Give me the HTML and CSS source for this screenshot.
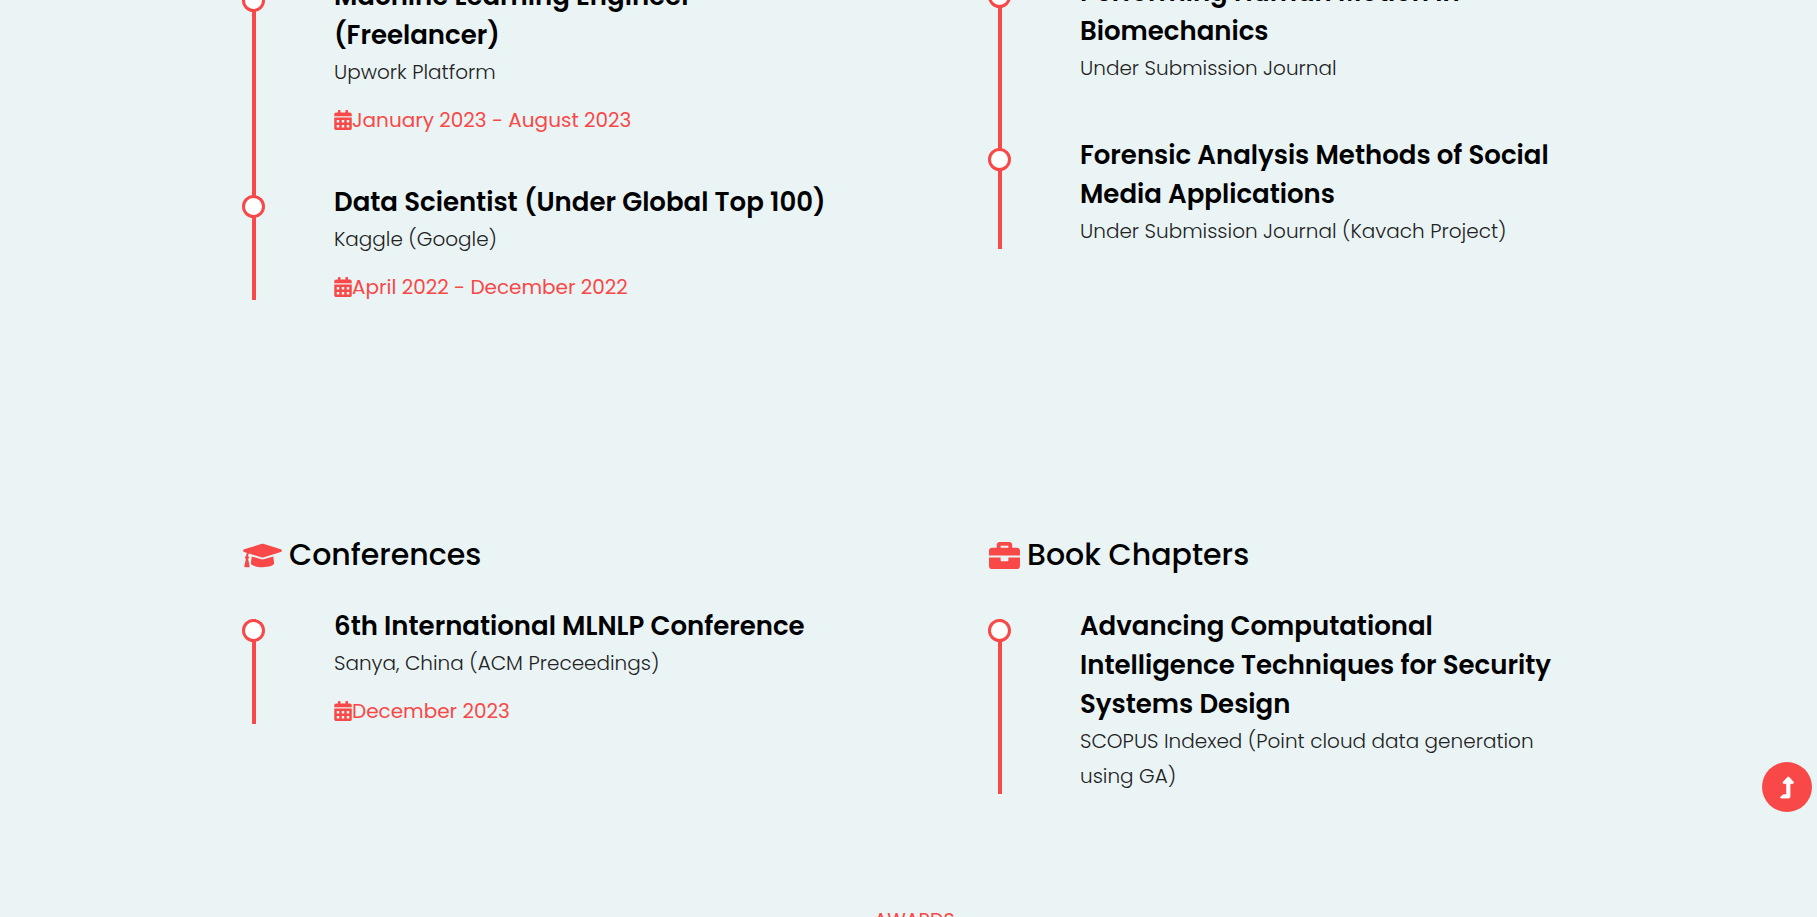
FILE: index.html
```html
<!DOCTYPE html>
<html lang="en">
<head>
<meta charset="utf-8">
<meta name="viewport" content="width=device-width, initial-scale=1">
<title>Resume</title>
<link rel="stylesheet" href="styles.css">
</head>
<body>
<svg class="sprite" aria-hidden="true">
  <symbol id="calendar" viewBox="0 0 448 512"><path fill-rule="evenodd" d="M0 464c0 26.500 21.500 48 48 48h352c26.500 0 48-21.500 48-48V192H0zM64 256h64v64H64zm128 0h64v64h-64zm128 0h64v64h-64zM64 384h64v64H64zm128 0h64v64h-64zm128 0h64v64h-64zM400 64h-48V16c0-8.800-7.200-16-16-16h-32c-8.800 0-16 7.200-16 16v48H160V16c0-8.800-7.200-16-16-16h-32c-8.800 0-16 7.200-16 16v48H48C21.500 64 0 85.500 0 112v48h448v-48c0-26.500-21.500-48-48-48z"/></symbol>
</svg>
<main class="resume">
  <section class="columns">
    <div class="column column-experience">
      <ol class="timeline">
        <li class="entry">
          <h3 class="entry-title">Machine Learning Engineer (Freelancer)</h3>
          <p class="entry-text">Upwork Platform</p>
          <p class="entry-date"><svg class="date-icon" aria-hidden="true"><use href="#calendar"/></svg>January 2023 - August 2023</p>
        </li>
        <li class="entry">
          <h3 class="entry-title">Data Scientist (Under Global Top 100)</h3>
          <p class="entry-text">Kaggle (Google)</p>
          <p class="entry-date"><svg class="date-icon" aria-hidden="true"><use href="#calendar"/></svg>April 2022 - December 2022</p>
        </li>
      </ol>
    </div>
    <div class="column">
      <ol class="timeline">
        <li class="entry">
          <h3 class="entry-title">Performing Human Motion in<br>Biomechanics</h3>
          <p class="entry-text">Under Submission Journal</p>
        </li>
        <li class="entry">
          <h3 class="entry-title">Forensic Analysis Methods of Social<br>Media Applications</h3>
          <p class="entry-text">Under Submission Journal (Kavach Project)</p>
        </li>
      </ol>
    </div>
  </section>
  <section class="columns columns-publications">
    <div class="column">
      <h2 class="column-title"><svg class="cap-icon" viewBox="0 0 640 512" aria-hidden="true"><path d="M622.340 153.200L343.400 67.500c-15.200-4.670-31.600-4.670-46.790 0L17.660 153.200c-23.540 7.230-23.540 38.360 0 45.590l48.630 14.940c-10.670 13.190-17.230 29.280-17.880 46.900C38.780 266.150 32 276.110 32 288c0 10.780 5.680 19.850 13.860 25.650L20.330 428.530C18.110 438.520 25.710 448 35.940 448h56.110c10.240 0 17.840-9.480 15.620-19.470L82.140 313.650C90.320 307.850 96 298.780 96 288c0-11.570-6.470-21.250-15.660-26.870.76-15.020 8.440-28.300 20.690-36.720L296.600 284.500c9.060 2.780 26.440 6.250 46.790 0l278.950-85.700c23.550-7.240 23.550-38.360 0-45.600zM352.790 315.090c-28.530 8.760-52.840 3.920-65.590 0l-145.020-44.550L128 384c0 35.350 85.960 64 192 64s192-28.650 192-64l-14.180-113.470z"/></svg>Conferences</h2>
      <ol class="timeline">
        <li class="entry">
          <h3 class="entry-title">6th International MLNLP Conference</h3>
          <p class="entry-text">Sanya, China (ACM Preceedings)</p>
          <p class="entry-date"><svg class="date-icon" aria-hidden="true"><use href="#calendar"/></svg>December 2023</p>
        </li>
      </ol>
    </div>
    <div class="column">
      <h2 class="column-title"><svg class="case-icon" viewBox="0 0 512 512" aria-hidden="true"><path d="M320 336c0 8.840-7.160 16-16 16h-96c-8.840 0-16-7.160-16-16v-48H0v144c0 25.600 22.400 48 48 48h416c25.600 0 48-22.400 48-48V288H320v48zm144-208h-80V80c0-25.600-22.400-48-48-48H176c-25.600 0-48 22.400-48 48v48H48c-25.600 0-48 22.400-48 48v80h512v-80c0-25.600-22.400-48-48-48zm-144 0H192V96h128v32z"/></svg>Book Chapters</h2>
      <ol class="timeline">
        <li class="entry">
          <h3 class="entry-title">Advancing Computational<br>Intelligence Techniques for Security<br>Systems Design</h3>
          <p class="entry-text">SCOPUS Indexed (Point cloud data generation<br>using GA)</p>
        </li>
      </ol>
    </div>
  </section>
</main>
<section class="awards">
  <p class="awards-label">AWARDS</p>
</section>
<button class="to-top" type="button" aria-label="Back to top"><svg class="to-top-icon" viewBox="0 0 320 512" aria-hidden="true"><path d="M313.550 119.670L209.590 7.670c-9.490-10.220-25.680-10.230-35.180 0L70.440 119.670C56.230 134.970 67.060 160 88.020 160H152v272H68.020a12 12 0 0 0-8.480 3.510l-56 56C-4.020 499.070 1.330 512 12.020 512H208c13.260 0 24-10.740 24-24V160h63.970c20.870 0 31.850-24.970 17.580-40.330z"/></svg></button>
</body>
</html>
```
FILE: styles.css
```css
:root {
  --accent: #f84848;
  --page: #eaf4f5;
}

*,
*::before,
*::after {
  box-sizing: border-box;
}

html {
  overflow: hidden;
}

body {
  margin: 0;
  overflow: hidden;
  background: var(--page);
  color: #000;
  font-family: Poppins, Inter, "Open Sans", sans-serif;
}

h2,
h3,
p,
ol {
  margin: 0;
  padding: 0;
}

svg {
  fill: currentColor;
}

.sprite {
  display: none;
}

.resume {
  width: 90%;
  max-width: 1333px;
  margin: -27px auto 0;
}

.columns {
  display: grid;
  grid-template-columns: 1fr 1fr;
  column-gap: 159px;
}

.column-experience {
  padding-top: 4px;
}

.columns-publications {
  padding-top: 232px;
}

.column-title {
  display: flex;
  align-items: center;
  gap: 7px;
  margin-bottom: 29px;
  padding-left: 1px;
  font-size: 30px;
  font-weight: 500;
  line-height: 46px;
}

.cap-icon,
.case-icon {
  height: 31px;
  color: var(--accent);
}

.cap-icon {
  width: 39px;
}

.case-icon {
  width: 31px;
}

.timeline {
  list-style: none;
}

.entry {
  position: relative;
  padding: 0 0 50px 92px;
}

.entry:last-child {
  padding-bottom: 0;
}

.entry::before {
  content: "";
  position: absolute;
  top: 12px;
  bottom: 0;
  left: 10px;
  width: 4px;
  background: var(--accent);
}

.entry:not(:last-child)::before {
  bottom: -12px;
}

.entry::after {
  content: "";
  position: absolute;
  top: 12px;
  left: 0;
  width: 23px;
  height: 23px;
  border: 3px solid var(--accent);
  border-radius: 50%;
  background: #fff;
}

.entry-title {
  font-size: 26px;
  font-weight: 600;
  line-height: 39px;
}

.entry-text {
  color: #222;
  font-size: 20px;
  font-weight: 300;
  line-height: 35px;
}

.entry-date {
  display: flex;
  align-items: center;
  margin-top: 17px;
  color: var(--accent);
  font-size: 20px;
  line-height: 26px;
}

.date-icon {
  width: 18px;
  height: 20px;
}

.awards {
  padding: 112px 0 0 12px;
  text-align: center;
}

.awards-label {
  color: var(--accent);
  font-size: 19px;
  font-weight: 400;
  line-height: 30px;
}

.to-top {
  position: fixed;
  right: 5px;
  bottom: 105px;
  display: flex;
  align-items: center;
  justify-content: center;
  width: 50px;
  height: 50px;
  padding: 0;
  border: 0;
  border-radius: 50%;
  background: var(--accent);
  color: #fff;
  cursor: pointer;
}

.to-top-icon {
  width: 14px;
  height: 21px;
  overflow: visible;
  stroke: currentColor;
  stroke-width: 20px;
}
```
